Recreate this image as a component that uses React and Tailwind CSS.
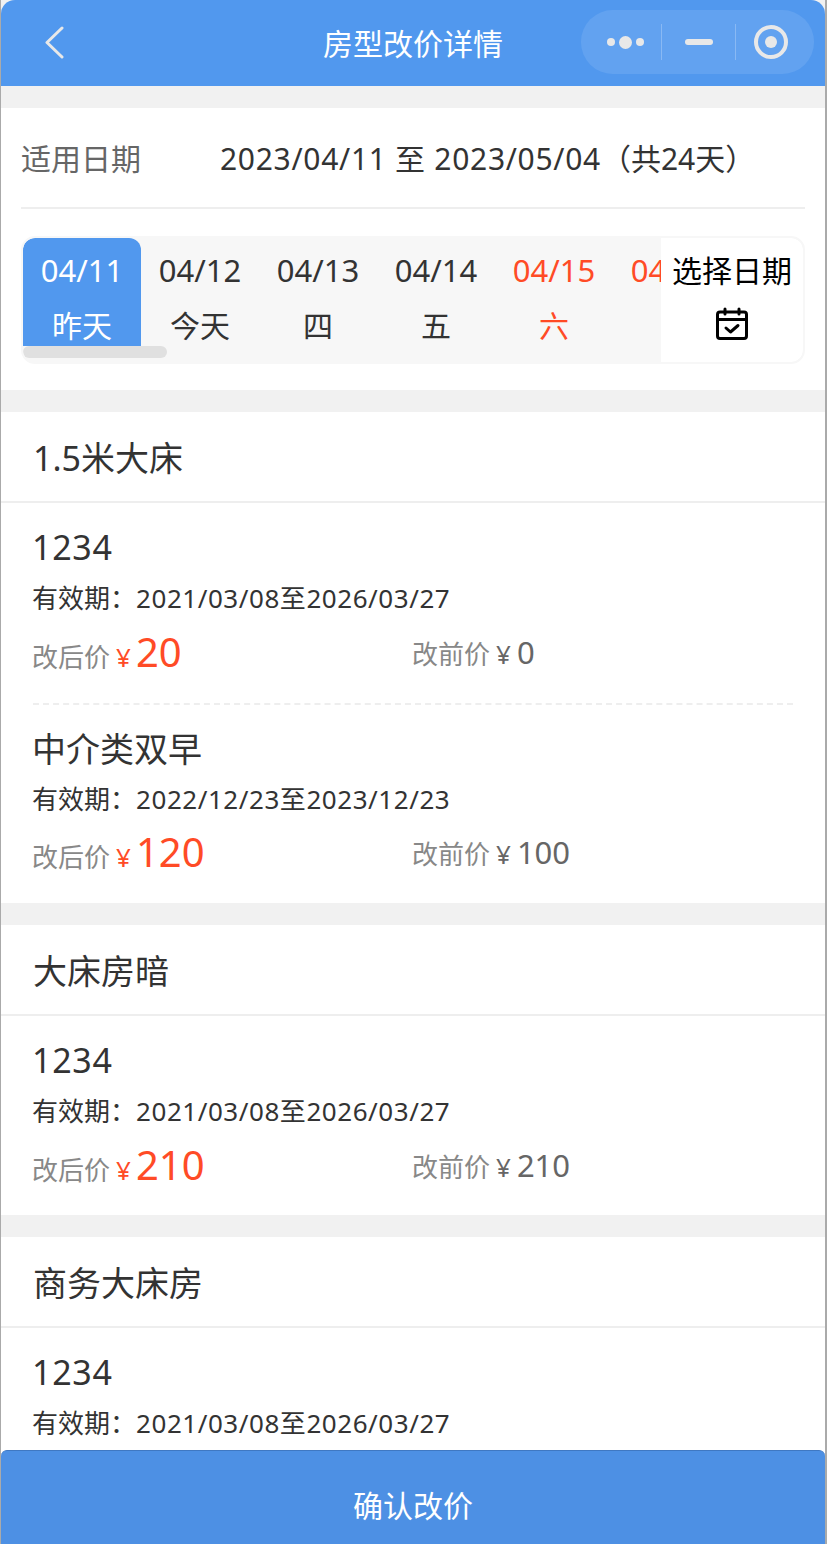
const days = [
  { d: "04/11", w: "昨天", active: true },
  { d: "04/12", w: "今天" },
  { d: "04/13", w: "四" },
  { d: "04/14", w: "五" },
  { d: "04/15", w: "六", red: true },
  { d: "04/16", w: "日", red: true },
];

const sections = [
  {
    name: "1.5米大床",
    items: [
      { name: "1234", date: "2021/03/08至2026/03/27", after: "20", before: "0" },
      { name: "中介类双早", date: "2022/12/23至2023/12/23", after: "120", before: "100" },
    ],
  },
  {
    name: "大床房暗",
    items: [{ name: "1234", date: "2021/03/08至2026/03/27", after: "210", before: "210" }],
    short: true,
  },
  {
    name: "商务大床房",
    items: [{ name: "1234", date: "2021/03/08至2026/03/27", after: "0", before: "0" }],
  },
];

const NavBar = () => (
  <header className="relative flex h-[86px] shrink-0 items-center justify-center rounded-t-[14px] bg-[#5198ee] pt-[2px]">
    <svg className="absolute left-[43px] top-[26px]" width="22" height="34" viewBox="0 0 22 34" fill="none">
      <path d="M18 2 L3 16.5 L18 31" stroke="#e8e8e8" strokeWidth="3" strokeLinecap="round" strokeLinejoin="round" />
    </svg>
    <h1 className="text-[30px] font-normal leading-none text-white">房型改价详情</h1>

    {/* Capsule buttons */}
    <div className="absolute left-[580px] top-[10px] flex h-[64px] w-[233px] items-center rounded-full bg-white/10">
      <div className="flex w-[80px] items-center justify-end gap-[4px] pr-[17px]">
        <span className="h-[8px] w-[8px] rounded-full bg-[#e8e8e8]" />
        <span className="h-[13px] w-[13px] rounded-full bg-[#e8e8e8]" />
        <span className="h-[8px] w-[8px] rounded-full bg-[#e8e8e8]" />
      </div>
      <span className="h-[36px] w-px bg-white/25" />
      <div className="flex w-[73px] items-center justify-center">
        <span className="h-[6px] w-[28px] rounded-full bg-[#e8e8e8]" />
      </div>
      <span className="h-[36px] w-px bg-white/25" />
      <div className="flex flex-1 items-center justify-center pr-[9px]">
        <span className="flex h-[34px] w-[34px] items-center justify-center rounded-full border-[4px] border-[#e8e8e8]">
          <span className="h-[12px] w-[12px] rounded-full bg-[#e8e8e8]" />
        </span>
      </div>
    </div>
  </header>
);

const DateStrip = () => (
  <div className="relative mx-[20px] mt-[27px] flex h-[128px] overflow-hidden rounded-[14px] border-[2px] border-[#f7f7f7] bg-[#f7f7f7]">
    <div className="flex">
      {days.map((day) => (
        <div
          key={day.d}
          className={`flex h-[108px] w-[118px] shrink-0 flex-col items-center overflow-hidden rounded-t-[12px] ${
            day.active ? "bg-[#5198ee] text-white" : day.red ? "text-[#ff4b26]" : "text-[#333]"
          }`}
        >
          <span className="mt-[12px] text-[31px] leading-[40px]">{day.d}</span>
          <span className="mt-[16px] text-[30px] leading-[40px]">{day.w}</span>
        </div>
      ))}
    </div>
    <span className="absolute left-0 top-[108px] h-[12px] w-[144px] rounded-full bg-[#e0e0e0]" />
    <div className="absolute right-0 top-0 flex h-[124px] w-[142px] flex-col items-center rounded-r-[12px] bg-white text-black">
      <span className="mt-[13px] text-[30px] leading-[40px]">选择日期</span>
      <svg className="mt-[16px]" width="34" height="34" viewBox="0 0 34 34" fill="none" stroke="#000" strokeWidth="3" strokeLinecap="round" strokeLinejoin="round">
        <rect x="2.5" y="5" width="29" height="26.5" rx="2.5" />
        <path d="M2.5 12.5H31.5M10 2V7M24 2V7" />
        <path d="M11 21L15.5 25L23 18.5" />
      </svg>
    </div>
  </div>
);

const RatePlan = ({ item, first, short }) => (
  <div className={short ? "h-[199px]" : "h-[200px]"}>
    {!first && <div className="mx-[32px] border-t-2 border-dashed border-[#eee]" />}
    <div className="flex flex-col px-[31px]">
      <div className={`mt-[22px] text-[34px] leading-[44px] text-[#333] ${item.name === "1234" ? "tracking-[0.7px]" : ""}`}>
        {item.name}
      </div>
      <div className={`${first ? "mt-[11px]" : "mt-[10px]"} text-[26px] leading-[36px] text-[#333]`}>
        有效期{"\uFF1A"}<span className="tracking-[0.55px]">{item.date}</span>
      </div>
      <div className={`${first ? "mt-[13px]" : "mt-[12px]"} flex h-[50px] items-center`}>
        <div className="flex w-[380px] items-baseline text-[#888]">
          <span className="text-[26px]">改后价</span>
          <span className="ml-[6px] text-[26px] text-[#ff4b26]">¥</span>
          <span className="ml-[5px] text-[40px] leading-none text-[#ff4b26]">{item.after}</span>
        </div>
        <div className="flex items-baseline text-[#888]">
          <span className="text-[26px]">改前价</span>
          <span className="ml-[6px] text-[26px] text-[#666]">¥</span>
          <span className="ml-[6px] text-[31px] leading-none text-[#666]">{item.before}</span>
        </div>
      </div>
    </div>
  </div>
);

export default function App() {
  return (
    <div
      className="relative flex h-[1544px] w-[827px] flex-col overflow-hidden border-l border-r-2 border-[#aaa] bg-[#f1f1f1]"
      style={{ fontFamily: '"Noto Sans", "Noto Sans CJK SC", sans-serif' }}
    >
      <NavBar />

      <section className="mt-[22px] h-[282px] shrink-0 bg-white">
        <div className="mx-[20px] flex h-[101px] items-center border-b-2 border-[#eee] pt-[2px]">
          <span className="w-[199px] text-[30px] text-[#666]">适用日期</span>
          <span className="whitespace-nowrap text-[30px] tracking-[0.7px] text-[#333]">
            2023/04/11 至 2023/05/04<span className="tracking-normal">{"\uFF08"}共24天{"\uFF09"}</span>
          </span>
        </div>
        <DateStrip />
      </section>

      {sections.map((section) => (
        <section key={section.name} className="mt-[22px] shrink-0 bg-white">
          <div className="flex h-[91px] items-center border-b-2 border-[#eee] px-[32px] pt-[3px] text-[34px] text-[#333]">
            {section.name}
          </div>
          {section.items.map((item, i) => (
            <RatePlan key={item.name} item={item} first={i === 0} short={section.short} />
          ))}
        </section>
      ))}

      <span className="absolute -left-px top-[108px] h-[102px] w-px bg-[#4a6fc0]" />
      <span className="absolute -right-[2px] top-[108px] h-[102px] w-[2px] bg-[#4a6fc0]" />

      <button className="absolute bottom-0 left-0 flex h-[94px] w-full items-center justify-center rounded-t-[6px] border-t border-[#3f78c2] bg-[#4d90e4] pt-[16px] text-[30px] text-white">
        确认改价
      </button>
    </div>
  );
}
